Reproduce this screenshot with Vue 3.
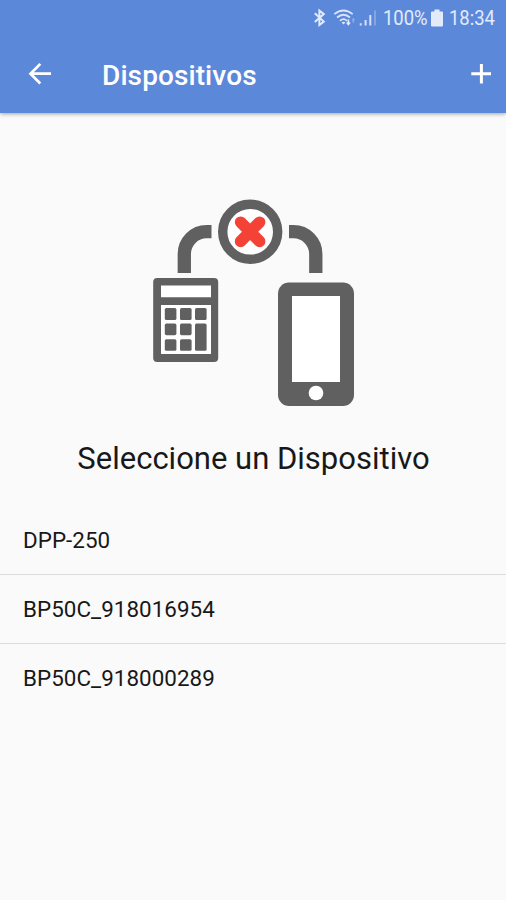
<template>
  <div class="screen">
    <header class="top">
      <div class="status-bar">
        <svg class="status-icons" width="66" height="20" viewBox="312 8 66 20" fill="none">
          <path d="M314.8 13.2L323.8 21.6L319.4 25V10.6L323.8 14L314.8 22" stroke="#e3ebfb" stroke-width="2" />
          <g stroke="#dbe5f9" stroke-width="1.7">
            <path d="M334.3 14.2Q343.5 6.8 352.7 14.2" />
            <path d="M337 17.5Q343.5 12 350 17.5" />
            <path d="M340 20.8Q343.5 17.6 347 20.8" />
          </g>
          <path d="M341.6 22.5Q343.5 21 345.4 22.5L343.5 24.6Z" fill="#dbe5f9" />
          <path d="M348.4 19.5V23.5M346.8 22.4L348.4 24.4L350 22.4" stroke="#e3ebfb" stroke-width="1.6" />
          <path d="M353.3 23V19M352 20.4L353.3 18.8L354.6 20.4" stroke="#8babe8" stroke-width="1.2" />
          <path d="M360.7 23.2V25.6M365.6 20V25.6M370.3 15V25.6" stroke="#d5e0f8" stroke-width="2" />
          <path d="M375 10.5V25.6" stroke="#84a4e6" stroke-width="2" />
        </svg>
        <span class="battery-level">100%</span>
        <svg class="battery" width="12" height="18" viewBox="0 0 12 18">
          <path d="M3.5 0.5H8.5V2.5H11Q12 2.5 12 3.5V16.5Q12 17.5 11 17.5H1Q0 17.5 0 16.5V3.5Q0 2.5 1 2.5H3.5Z" fill="#e3ebfb" />
        </svg>
        <span class="clock">18:34</span>
      </div>
      <div class="toolbar">
        <svg class="back" width="24" height="24" viewBox="0 0 24 24" fill="none" stroke="#fff" stroke-width="2.7">
          <path d="M24 11.7H4M13.3 1.9L3.5 11.7L13.3 21.5" />
        </svg>
        <h1 class="title">Dispositivos</h1>
        <svg class="add" width="20" height="20" viewBox="0 0 20 20" stroke="#fff" stroke-width="3">
          <path d="M0.3 9.7H20M10.4 0V19.6" />
        </svg>
      </div>
    </header>

    <main>
      <svg class="pairing" width="206" height="212" viewBox="151 197 206 212" fill="none">
        <!-- cables -->
        <path d="M184.3 273V254A22.3 22.3 0 0 1 206.6 231.7H211.5" stroke="#606060" stroke-width="13.3" />
        <path d="M289 231.7H293.5A22.3 22.3 0 0 1 315.8 254V273" stroke="#606060" stroke-width="13.3" />
        <!-- connection state -->
        <circle cx="250.2" cy="231.8" r="27.5" fill="#fff" stroke="#606060" stroke-width="9.4" />
        <path d="M240.6 222.2L259.6 241.4M259.6 222.2L240.6 241.4" stroke="#f44336" stroke-width="11.6" stroke-linecap="round" />
        <!-- calculator -->
        <rect x="153.2" y="278" width="65" height="84" rx="4" fill="#606060" />
        <path d="M161 285.6H211V297.3H161ZM161 305H211V354H161Z" fill="#fff" />
        <g fill="#606060">
          <rect v-for="k in keys" :key="k.x + '-' + k.y" :x="k.x" :y="k.y" width="11.6" :height="k.h" rx="1.6" />
        </g>
        <!-- phone -->
        <rect x="278" y="282.5" width="76" height="123.5" rx="11" fill="#606060" />
        <path d="M292 296H340V382H292Z" fill="#fff" />
        <circle cx="316" cy="393" r="7.3" fill="#fff" />
      </svg>

      <h2 class="heading">Seleccione un Dispositivo</h2>

      <ul class="devices">
        <li v-for="device in devices" :key="device" class="device">{{ device }}</li>
      </ul>
    </main>
  </div>
</template>

<script setup>
import { ref } from 'vue';

const devices = ref(['DPP-250', 'BP50C_918016954', 'BP50C_918000289']);

const keys = [
  { x: 164.8, y: 308, h: 12 },
  { x: 180, y: 308, h: 12 },
  { x: 195, y: 308, h: 12 },
  { x: 164.8, y: 323.6, h: 11.6 },
  { x: 180, y: 323.6, h: 11.6 },
  { x: 195, y: 323.6, h: 27.2 },
  { x: 164.8, y: 339.2, h: 11.6 },
  { x: 180, y: 339.2, h: 11.6 },
];
</script>

<style>
body {
  background: #fafafa;
}
</style>

<style scoped>
.screen {
  min-height: 900px;
  overflow: hidden;
  background: #fafafa;
  color: #181818;
  font-family: Roboto, sans-serif;
}

.top {
  height: 113px;
  background: #5c88da;
  box-shadow: 0 1px 4px rgba(0, 0, 0, 0.35);
}

.status-bar {
  display: flex;
  height: 36px;
  padding: 0 11px 0 312px;
  align-items: center;
  color: #e3ebfb;
  font-size: 20.5px;
  line-height: 36px;
}

.status-icons {
  flex: none;
}

.battery-level {
  width: 45px;
  margin-left: 5px;
  transform: scaleX(0.9);
  transform-origin: left;
}

.battery {
  flex: none;
  margin-left: 3px;
}

.clock {
  width: 46px;
  margin-left: 6px;
  transform: scaleX(0.9);
  transform-origin: left;
}

.toolbar {
  display: flex;
  height: 76px;
  padding: 0 15px 0 27px;
  align-items: center;
}

.title {
  flex: 1;
  margin: 3px 0 0 51px;
  color: #fff;
  font-size: 28px;
  font-weight: 500;
  letter-spacing: 0.1px;
  line-height: 32px;
}

.pairing {
  display: block;
  margin: 84px auto 0 151px;
}

.heading {
  margin: 32px 0 0 1px;
  font-size: 31px;
  font-weight: 400;
  line-height: 36px;
  text-align: center;
}

.devices {
  margin: 29px 0 0;
  padding: 0;
  list-style: none;
}

.device {
  height: 68px;
  padding: 0 23px;
  box-sizing: border-box;
  font-size: 22.4px;
  letter-spacing: 0.04px;
  line-height: 68px;
}

.device + .device {
  height: 69px;
  border-top: 1px solid #dcdcdc;
}
</style>
